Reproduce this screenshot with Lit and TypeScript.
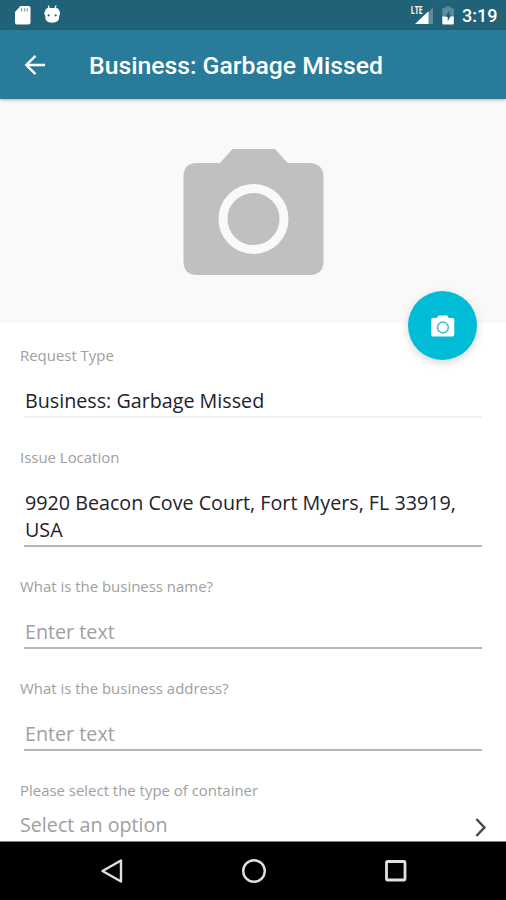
import { LitElement, html, css } from "lit";
import { customElement, property } from "lit/decorators.js";

@customElement("status-bar")
class StatusBar extends LitElement {
  static styles = css`
    :host {
      display: flex;
      align-items: center;
      justify-content: space-between;
      height: 30px;
      background: #206378;
      color: #fff;
      font-family: Roboto, sans-serif;
    }
    svg {
      display: block;
    }
    .clock {
      width: 44px;
      font-size: 18px;
      font-weight: 500;
      line-height: 30px;
      padding-top: 2px;
      white-space: nowrap;
    }
    .right {
      display: flex;
      align-items: center;
    }
    .lte {
      font: 700 10.5px "Open Sans", sans-serif;
    }
  `;
  render() {
    return html`
      <svg width="80" height="30" viewBox="0 0 80 30">
        <path d="M20.5 6H28.5Q30.5 6 30.5 8V22.6Q30.5 24.6 28.5 24.6H17Q15 24.6 15 22.6V12Z" fill="#fff" />
        <path d="M21.5 8.3v3.2M24.5 8.3v3.2M27.3 8.3v3.2" stroke="#7da5b2" stroke-width="1.3" />
        <path d="M48.3 5.5L49.5 9M56 5.5L54.8 9" stroke="#e4eef1" stroke-width="1.4" />
        <path
          d="M45.4 10Q46 8 48.2 8H56Q58.4 8 59 10L60 12.5V14.5L59.2 15.500Q59.800 22.800 52.200 22.800Q44.600 22.800 45.200 15.500L44.400 14.500V12.500Z"
          fill="#fff"
        />
        <circle cx="48.7" cy="15.3" r="1.1" fill="#206378" />
        <circle cx="55.7" cy="15.3" r="1.1" fill="#206378" />
      </svg>
      <div class="right">
        <svg width="52" height="30" viewBox="0 0 52 30">
          <path d="M16 14.5L23 7.5V24H16Z" fill="#5d8c9b" />
          <path d="M16 13.5L18.500 11.200V24H5Z" fill="#fff" />
          <text class="lte" x="0.8" y="14" textLength="12" lengthAdjust="spacingAndGlyphs" fill="#fff">LTE</text>
          <path d="M32.3 8.3H35.5V6.4H40.5V8.3H43.8V17H32.3Z" fill="#5d8c9b" />
          <path d="M32.3 16.5H43.8V23.4Q43.8 24.4 42.8 24.4H33.3Q32.3 24.4 32.3 23.4Z" fill="#fff" />
          <path d="M39.4 10.5L35.4 16.8H37.7V21.5L41.2 14.8H39.4Z" fill="#206378" />
        </svg>
        <div class="clock">3:19</div>
      </div>
    `;
  }
}

@customElement("form-field")
class FormField extends LitElement {
  @property() label = "";
  @property() value = "";
  @property() placeholder = "";
  @property({ type: Boolean, reflect: true }) readonly = false;
  @property({ type: Boolean, reflect: true }) select = false;

  static styles = css`
    :host {
      display: block;
      font-family: "Open Sans", "Noto Sans", sans-serif;
    }
    .label {
      font-size: 14.95px;
      line-height: 20px;
      color: #a0a0a0;
      white-space: nowrap;
    }
    .value {
      margin: 22px 4px 0 4px;
      padding: 0 1px 2px;
      border-bottom: 2px solid #b6b6b6;
      font-size: 19.72px;
      line-height: 27px;
      color: #22222c;
    }
    .empty {
      color: #a0a0a0;
    }
    :host([readonly]) .value {
      border-color: #f0f0f0;
    }
    .option {
      display: flex;
      justify-content: space-between;
      align-items: center;
      margin: 11px -1px 0 0;
      font-size: 19.72px;
      line-height: 27px;
      color: #a0a0a0;
    }
    .option svg {
      display: block;
      margin-top: 6px;
    }
  `;
  render() {
    const text = this.value || this.placeholder;
    return html`
      <div class="label">${this.label}</div>
      ${this.select
        ? html`<div class="option">
            <span>${text}</span>
            <svg width="14" height="21" viewBox="0 0 14 21">
              <path d="M3.4 2L11.4 10.5L3.4 19" fill="none" stroke="#484848" stroke-width="2.5" />
            </svg>
          </div>`
        : html`<div class="value ${this.value ? "" : "empty"}">${text}</div>`}
    `;
  }
}

@customElement("app-root")
class AppRoot extends LitElement {
  static styles = css`
    :host {
      display: flex;
      flex-direction: column;
      height: 900px;
      overflow: hidden;
      background: #fff;
    }
    svg {
      display: block;
    }
    .bar {
      display: flex;
      align-items: center;
      flex: none;
      height: 69px;
      background: #287b99;
      color: #fff;
      position: relative;
      z-index: 1;
      box-shadow: 0 1px 3px rgba(80, 40, 30, 0.35);
    }
    .back {
      margin: 0 43px 0 24px;
    }
    .title {
      font: 500 24.75px/32px Roboto, sans-serif;
      padding-top: 3px;
      white-space: nowrap;
    }
    .photo {
      position: relative;
      flex: none;
      height: 224px;
      background: #f9f9f9;
      display: flex;
      justify-content: center;
    }
    .placeholder {
      margin-top: 49px;
    }
    .fab {
      position: absolute;
      right: 29px;
      bottom: -37px;
      width: 69px;
      height: 69px;
      border-radius: 50%;
      background: #00bcd7;
      display: flex;
      align-items: center;
      justify-content: center;
      box-shadow: 0 3px 8px rgba(0, 0, 0, 0.16);
    }
    .form {
      flex: 1;
      min-height: 0;
      overflow: hidden;
      display: flex;
      flex-direction: column;
      gap: 29px;
      padding: 22px 20px 0;
    }
    .nav {
      flex: none;
      height: 59px;
      background: #000;
      border-top: 1px solid #808080;
      box-sizing: border-box;
      display: flex;
      justify-content: center;
      align-items: center;
      gap: 117px;
      padding-left: 1px;
    }
  `;
  render() {
    return html`
      <status-bar></status-bar>
      <header class="bar">
        <svg class="back" width="22" height="22" viewBox="0 0 22 22">
          <path d="M11.5 1.8L2.3 11L11.5 20.2M2.3 11H21" fill="none" stroke="#fff" stroke-width="2.4" />
        </svg>
        <div class="title">Business: Garbage Missed</div>
      </header>
      <section class="photo">
        <svg class="placeholder" width="142" height="128" viewBox="0 0 142 128">
          <path
            d="M50.5 1H93L105.5 15H127Q141.5 15.5 141.5 29V113Q141.5 127 127.5 127H15Q1.5 127 1.5 113V29Q1.5 15 15 15H38Z"
            fill="#c1bfc0"
          />
          <circle cx="71.5" cy="71" r="30.5" fill="none" stroke="#f9f9f9" stroke-width="9" />
        </svg>
        <div class="fab">
          <svg width="24" height="22" viewBox="0 0 24 22">
            <path
              d="M7.5 0.5H16L18 3H21.5Q23.3 3 23.3 4.8V19.7Q23.3 21.5 21.5 21.5H2Q0.3 21.5 0.3 19.7V4.8Q0.3 3 2 3H5.5Z"
              fill="#fff"
            />
            <circle cx="11.9" cy="12.5" r="5.4" fill="none" stroke="#35bed3" stroke-width="1.5" />
          </svg>
        </div>
      </section>
      <main class="form">
        <form-field label="Request Type" value="Business: Garbage Missed" readonly></form-field>
        <form-field label="Issue Location" value="9920 Beacon Cove Court, Fort Myers, FL 33919, USA"></form-field>
        <form-field label="What is the business name?" placeholder="Enter text"></form-field>
        <form-field label="What is the business address?" placeholder="Enter text"></form-field>
        <form-field label="Please select the type of container" placeholder="Select an option" select></form-field>
      </main>
      <nav class="nav">
        <svg width="24" height="24" viewBox="0 0 24 24">
          <path d="M21 1.5V22.5L2.5 12Z" fill="none" stroke="#e0e0e0" stroke-width="2.4" stroke-linejoin="round" />
        </svg>
        <svg width="26" height="26" viewBox="0 0 26 26">
          <circle cx="13" cy="13" r="10.8" fill="none" stroke="#e0e0e0" stroke-width="2.4" />
        </svg>
        <svg width="24" height="24" viewBox="0 0 24 24">
          <rect x="2.5" y="2.5" width="18.5" height="18.5" rx="1" fill="none" stroke="#e0e0e0" stroke-width="2.8" />
        </svg>
      </nav>
    `;
  }
}
